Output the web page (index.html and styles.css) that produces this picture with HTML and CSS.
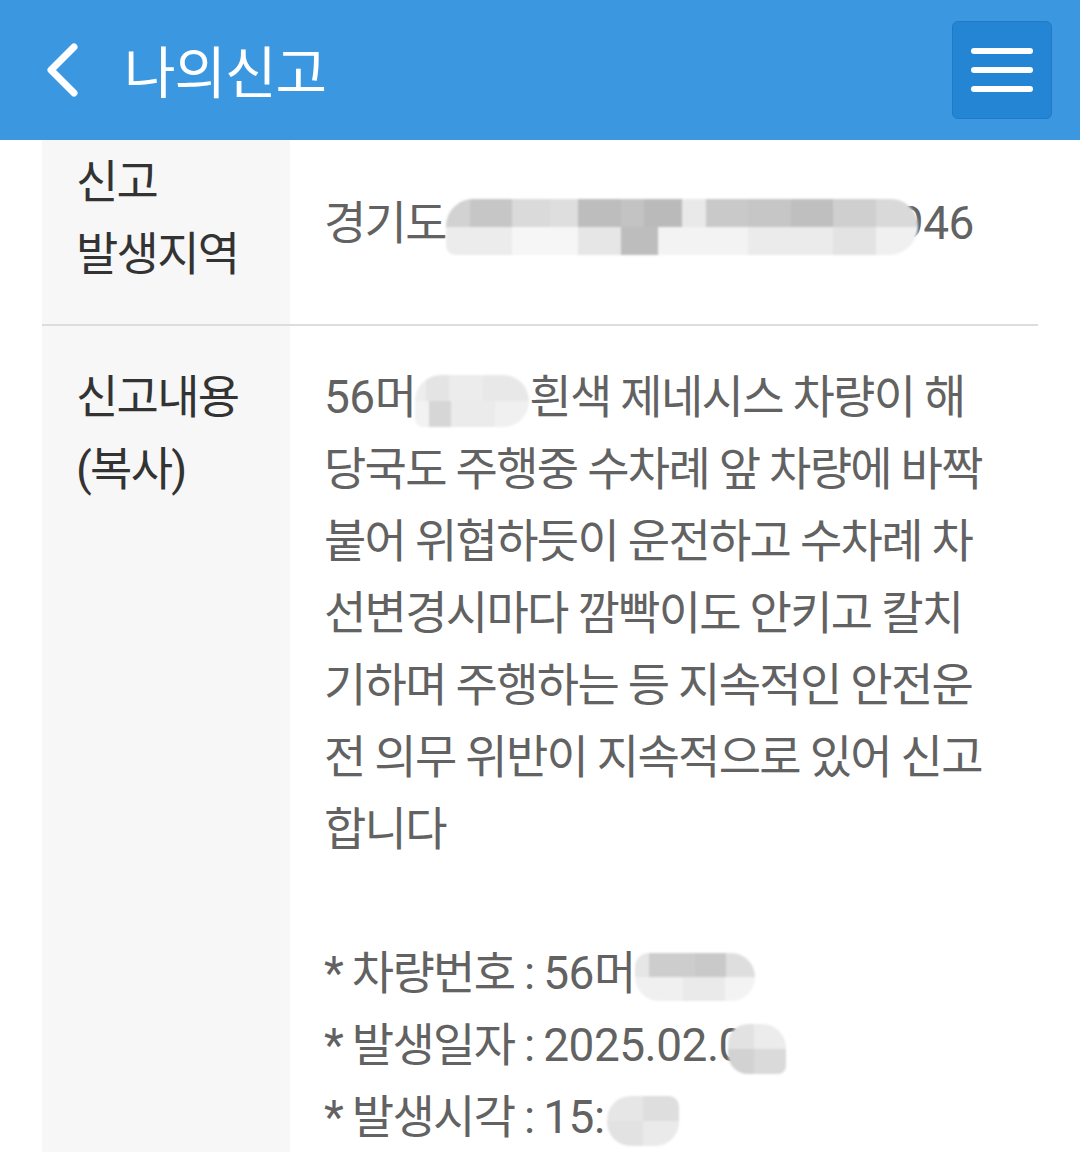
FILE: index.html
```html
<!DOCTYPE html>
<html lang="ko">
<head>
  <meta charset="UTF-8" />
  <meta name="viewport" content="width=device-width, initial-scale=1.0"/>
  <title>나의신고</title>
  <link rel="stylesheet" href="styles.css">
</head>
<body>
  <header class="topbar">
    <a class="back" href="#" aria-label="뒤로">
      <svg width="36" height="56" viewBox="0 0 36 56">
        <path d="M30 5 L7 28 L30 51" fill="none" stroke="#fff" stroke-width="7" stroke-linecap="round" stroke-linejoin="round"/>
      </svg>
    </a>
    <h1 class="title">나의신고</h1>
    <button class="menu" aria-label="메뉴">
      <span></span><span></span><span></span>
    </button>
  </header>

  <div class="report">
    <div class="row">
      <div class="label">신고<br>발생지역</div>
      <div class="value value-mid">경기도<span class="mask mask-addr"></span><span class="num">946</span></div>
    </div>
    <div class="row">
      <div class="label">신고내용<br>(복사)</div>
      <div class="value">
        <span class="num">56</span>머<span class="mask mask-plate"></span>흰색 제네시스 차량이 해당국도 주행중 수차례 앞 차량에 바짝 붙어 위협하듯이 운전하고 수차례 차선변경시마다 깜빡이도 안키고 칼치기하며 주행하는 등 지속적인 안전운전 의무 위반이 지속적으로 있어 신고합니다<br><br>
        * 차량번호 : <span class="num">56</span>머<span class="mask mask-plate2"></span><br>
        * 발생일자 : <span class="num">2025.02.0</span><span class="mask mask-date"></span><br>
        * 발생시각 : <span class="num">15:</span><span class="mask mask-time"></span>
      </div>
    </div>
  </div>
</body>
</html>
```

FILE: styles.css
```css
body {
  margin: 0;
  background: #fff;
  font-family: 'Roboto', 'Noto Sans CJK KR', sans-serif;
}

.topbar {
  position: relative;
  z-index: 2;
  height: 140px;
  background: #3a97e0;
  display: flex;
  align-items: center;
  padding: 0 28px 0 44px;
  box-sizing: border-box;
}

.back {
  display: flex;
}

.title {
  margin: 0 0 4px 44px;
  font-size: 56px;
  font-weight: 400;
  letter-spacing: -1px;
  color: #fff;
}

.menu {
  margin-left: auto;
  width: 100px;
  height: 98px;
  background: #2585d5;
  border: 1px solid #2079c6;
  border-radius: 6px;
  display: flex;
  flex-direction: column;
  align-items: center;
  justify-content: center;
  gap: 13px;
  padding: 0;
}

.menu span {
  width: 62px;
  height: 6px;
  border-radius: 3px;
  background: #fff;
}

.report {
  margin: -30px 42px 0;
}

.row {
  display: grid;
  grid-template-columns: 248px 1fr;
  border-bottom: 2px solid #dddddd;
}

.label {
  background: #f7f7f7;
  padding: 36px 20px 34px 34px;
  font-size: 46px;
  line-height: 72px;
  letter-spacing: -1.7px;
  color: #333;
}

.row + .row .label,
.row + .row .value {
  padding-top: 35px;
}

.row + .row .label {
  min-height: 900px;
}

.value {
  padding: 34px 42px 36px 34px;
  font-size: 46px;
  line-height: 72px;
  letter-spacing: -1.7px;
  color: #626262;
}

.value-mid {
  align-self: center;
  padding-top: 42px;
  padding-bottom: 30px;
}

.num {
  letter-spacing: -0.5px;
}

.mask {
  display: inline-block;
  vertical-align: middle;
  filter: blur(1px);
  position: relative;
  z-index: 1;
}

.mask-addr {
  width: 472px;
  height: 56px;
  margin-right: -20px;
  border-radius: 28px 28px 30px 10px;
  background:
    linear-gradient(to right, #d2d2d2 0 5%, #c6c6c6 5% 14%, #dadada 14% 22%, #dedede 22% 28%, #bdbdbd 28% 37%, #c3c3c3 37% 42%, #bababa 42% 50%, #e9e9e9 50% 55%, #c9c9c9 55% 64%, #c6c6c6 64% 73%, #bfbfbf 73% 82%, #cfcfcf 82% 91%, #d9d9d9 91% 100%) top / 100% 50% no-repeat,
    linear-gradient(to right, #ececec 0 14%, #f6f6f6 14% 28%, #e6e6e6 28% 37%, #bdbdbd 37% 45%, #f3f3f3 45% 64%, #ebebeb 64% 82%, #e3e3e3 82% 91%, #f0f0f0 91% 100%) bottom / 100% 50% no-repeat;
}

.mask-plate {
  width: 114px;
  height: 52px;
  border-radius: 26px 26px 26px 8px;
  background:
    linear-gradient(to right, #ededed 0 10%, #e4e4e4 10% 30%, #ececec 30% 60%, #e8e8e8 60% 100%) top / 100% 50% no-repeat,
    linear-gradient(to right, #f2f2f2 0 12%, #d6d6d6 12% 32%, #ebebeb 32% 70%, #f0f0f0 70% 100%) bottom / 100% 50% no-repeat;
}

.mask-plate2 {
  width: 120px;
  height: 48px;
  border-radius: 14px 24px 24px 24px;
  background:
    linear-gradient(to right, #e6e6e6 0 12%, #cdcdcd 12% 50%, #c9c9c9 50% 76%, #dedede 76% 100%) top / 100% 50% no-repeat,
    linear-gradient(to right, #f0f0f0 0 40%, #eaeaea 40% 75%, #f3f3f3 75% 100%) bottom / 100% 50% no-repeat;
}

.mask-date {
  width: 58px;
  height: 50px;
  margin-left: -16px;
  border-radius: 20px 24px 8px 20px;
  background:
    linear-gradient(to right, #e2e2e2 0 45%, #ececec 45% 100%) top / 100% 50% no-repeat,
    linear-gradient(to right, #d2d2d2 0 45%, #dadada 45% 100%) bottom / 100% 50% no-repeat;
}

.mask-time {
  width: 72px;
  height: 50px;
  margin-left: 2px;
  border-radius: 24px 10px 24px 24px;
  background:
    linear-gradient(to right, #e6e6e6 0 50%, #dedede 50% 100%) top / 100% 50% no-repeat,
    linear-gradient(to right, #e2e2e2 0 50%, #eaeaea 50% 100%) bottom / 100% 50% no-repeat;
}
```
